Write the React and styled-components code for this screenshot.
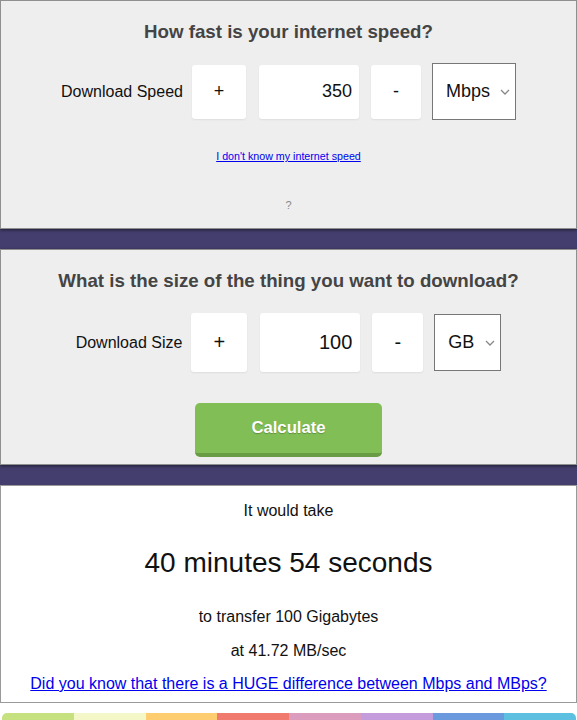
import React from 'react'
import styled, { createGlobalStyle } from 'styled-components'

const GlobalStyle = createGlobalStyle`
  body {
    margin: 0;
    background: #fff;
    font-family: "Liberation Sans", Arial, sans-serif;
  }
`

const Page = styled.div`
  width: 577px;
  background: #433e6d;
  display: flex;
  flex-direction: column;
  gap: 20px;`

const Panel = styled.section`
  background: #eeeeee;
  border: 1px solid #8f8f8f;
  box-shadow: 0 1px 3px rgba(0, 0, 0, 0.55);
  padding: 20px 0 ${p => p.bottom}px;
  display: flex;
  flex-direction: column;
  align-items: center;`

const Title = styled.h2`
  margin: 0;
  font-size: 18.72px;
  line-height: 22px;
  font-weight: bold;
  color: #444;
  text-align: center;`

const Row = styled.div`
  margin-top: ${p => p.top}px;
  height: ${p => p.height}px;
  display: flex;
  align-items: center;`

const Label = styled.label`
  font-size: 16px;
  color: #111;
  margin-right: 9px;`

const Box = styled.div`
  width: ${p => p.w}px;
  height: ${p => p.h}px;
  margin-right: ${p => p.gap}px;
  background: #fff;
  border-radius: 3px;
  box-shadow: 0 1px 2px rgba(0, 0, 0, 0.07);
  display: flex;
  align-items: center;
  justify-content: ${p => (p.right ? 'flex-end' : 'center')};
  padding-right: ${p => (p.right ? p.pad : 0)}px;
  box-sizing: border-box;
  font-size: ${p => p.size}px;
  color: #111;
  user-select: none;`

const SelectBox = styled.div`
  width: ${p => p.w}px;
  height: 57px;
  box-sizing: border-box;
  background: #fff;
  border: 1px solid #777;
  display: flex;
  align-items: center;
  justify-content: space-between;
  padding: 0 5px 0 13px;
  font-size: 18px;
  color: #111;`

const HelpLink = styled.a`
  margin-top: 30px;
  font-size: 10.7px;
  line-height: 13px;
  color: #0000ee;
  text-decoration: underline;`

const Question = styled.div`
  margin-top: 35px;
  font-size: 11px;
  line-height: 14px;
  color: #888;`

const CalcButton = styled.button`
  margin-top: 31px;
  width: 187px;
  height: 54px;
  border: none;
  border-bottom: 4px solid #6a9c45;
  border-radius: 5px;
  background: #81bf56;
  color: #fff;
  font-family: inherit;
  font-size: 16.7px;
  font-weight: bold;
  text-shadow: 0 1px 1px rgba(0, 0, 0, 0.25);
  cursor: pointer;`

const Result = styled.section`
  background: #fff;
  border: 1px solid #9a9a9a;
  padding: 16px 0 9px;
  display: flex;
  flex-direction: column;
  align-items: center;
  color: #111;`

const Line = styled.div`
  margin-top: ${p => p.top || 0}px;
  font-size: ${p => p.size || 16}px;
  line-height: ${p => (p.size ? 32 : 18)}px;
  text-align: center;`

const InfoLink = styled.a`
  margin-top: 15px;
  font-size: 16px;
  line-height: 18px;
  color: #0000ee;
  text-decoration: underline;`

const ColorBar = styled.div`
  margin: 10px 1px 0 2px;
  height: 10px;
  display: flex;
  border-radius: 5px 5px 0 0;
  overflow: hidden;`

const Swatch = styled.div`
  flex: 1;
  background: ${p => p.color};`

const swatches = ['#c6e17f', '#f4f8c9', '#fdcd6f', '#ef7a6d', '#dc9cbd', '#c49cdc', '#6a99dd', '#5ec0e1']

const Chevron = () => (
  <svg width="10" height="6" viewBox="0 0 10 6">
    <path d="M1 1l4 4 4-4" fill="none" stroke="#888" strokeWidth="1.3" />
  </svg>
)

const InputRow = ({ label, value, unit, big }) => {
  const size = big ? 20 : 18
  const h = big ? 59 : 54
  return (
    <Row top={big ? 21 : 20} height={big ? 59 : 57}>
      <Label>{label}</Label>
      <Box w={big ? 56 : 54} h={h} gap={13} size={size}>+</Box>
      <Box w={100} h={h} gap={12} size={size} right pad={big ? 8 : 7}>{value}</Box>
      <Box w={big ? 51 : 50} h={h} gap={11} size={size}>-</Box>
      <SelectBox w={big ? 67 : 84}>
        <span>{unit}</span>
        <Chevron />
      </SelectBox>
    </Row>
  )
}

const App = () => {
  return (
    <>
      <GlobalStyle />
      <Page>
        <Panel bottom={16}>
          <Title>How fast is your internet speed?</Title>
          <InputRow label="Download Speed" value="350" unit="Mbps" />
          <HelpLink href="#">I don't know my internet speed</HelpLink>
          <Question>?</Question>
        </Panel>
        <Panel bottom={7}>
          <Title>What is the size of the thing you want to download?</Title>
          <InputRow label="Download Size" value="100" unit="GB" big />
          <CalcButton>Calculate</CalcButton>
        </Panel>
        <Result>
          <Line>It would take</Line>
          <Line top={27} size={28}>40 minutes 54 seconds</Line>
          <Line top={29}>to transfer 100 Gigabytes</Line>
          <Line top={16}>at 41.72 MB/sec</Line>
          <InfoLink href="#">Did you know that there is a HUGE difference between Mbps and MBps?</InfoLink>
        </Result>
      </Page>
      <ColorBar>
        {swatches.map(c => <Swatch key={c} color={c} />)}
      </ColorBar>
    </>
  )
}

export default App
